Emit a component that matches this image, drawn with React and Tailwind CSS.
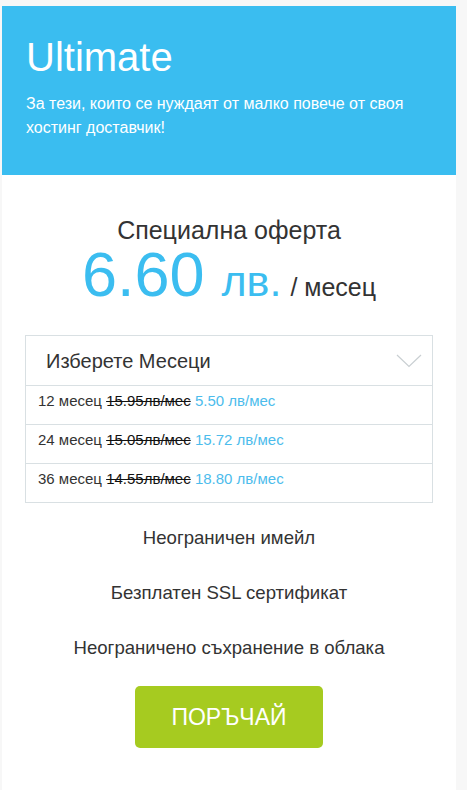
export default function App() {
  const rows = [
    { m: "12 месец", old: "15.95лв/мес", price: "5.50 лв/мес" },
    { m: "24 месец", old: "15.05лв/мес", price: "15.72 лв/мес" },
    { m: "36 месец", old: "14.55лв/мес", price: "18.80 лв/мес" },
  ];
  const features = [
    "Неограничен имейл",
    "Безплатен SSL сертификат",
    "Неограничено съхранение в облака",
  ];
  return (
    <div
      className="min-h-[790px] bg-[#f7f7f7] pt-[6px] pl-[2px] overflow-hidden"
      style={{ fontFamily: '"Liberation Sans", Arial, sans-serif' }}
    >
      <div className="w-[454px] bg-white pb-[80px]">
        <div className="h-[169px] bg-[#3abdf0] pl-[24px] pr-[36px] pt-[29px] text-white">
          <div className="text-[40px] leading-[44px]">Ultimate</div>
          <p className="mt-[13px] text-[16px] leading-[24px]">
            За тези, които се нуждаят от малко повече от своя хостинг доставчик!
          </p>
        </div>
        <div className="pt-[39px] text-center text-[#333]">
          <div className="text-[25px] leading-[32px]">Специална оферта</div>
          <div className="flex items-baseline justify-center leading-[56px]">
            <span className="text-[63px] text-[#3bbdf0]">6.60</span>
            <span className="ml-[17px] text-[43px] text-[#3bbdf0]">лв.</span>
            <span className="ml-[9px] text-[25px]">/ месец</span>
          </div>
        </div>
        <div className="mx-[23px] mt-[20px] border border-[#d9e0e3]">
          <div className="flex h-[49px] items-center justify-between pl-[20px] pr-[10px] text-[20px] text-[#333]">
            <span>Изберете Месеци</span>
            <svg width="26" height="14" viewBox="0 0 26 14" fill="none">
              <path d="M1 1 L13 12.5 L25 1" stroke="#c9cfd2" strokeWidth="1.2" />
            </svg>
          </div>
          {rows.map((r) => (
            <div
              key={r.m}
              className="h-[39px] border-t border-[#d9e0e3] pl-[12px] pt-[5px] text-[15px] leading-[20px]"
            >
              <span className="text-[#333]">{r.m} </span>
              <span className="text-[#111] line-through">{r.old}</span>
              <span className="text-[#4cbcec]"> {r.price}</span>
            </div>
          ))}
        </div>
        <div className="mt-[23px] flex flex-col items-center text-[18.6px] leading-[24px] text-[#333]">
          {features.map((f, i) => (
            <div key={f} className={i === 0 ? "" : "mt-[31px]"}>
              {f}
            </div>
          ))}
        </div>
        <div className="mt-[26px] flex justify-center">
          <button className="h-[62px] w-[188px] rounded-[5px] bg-[#a6cb20] text-[23px] uppercase text-white">
            ПОРЪЧАЙ
          </button>
        </div>
      </div>
    </div>
  );
}
